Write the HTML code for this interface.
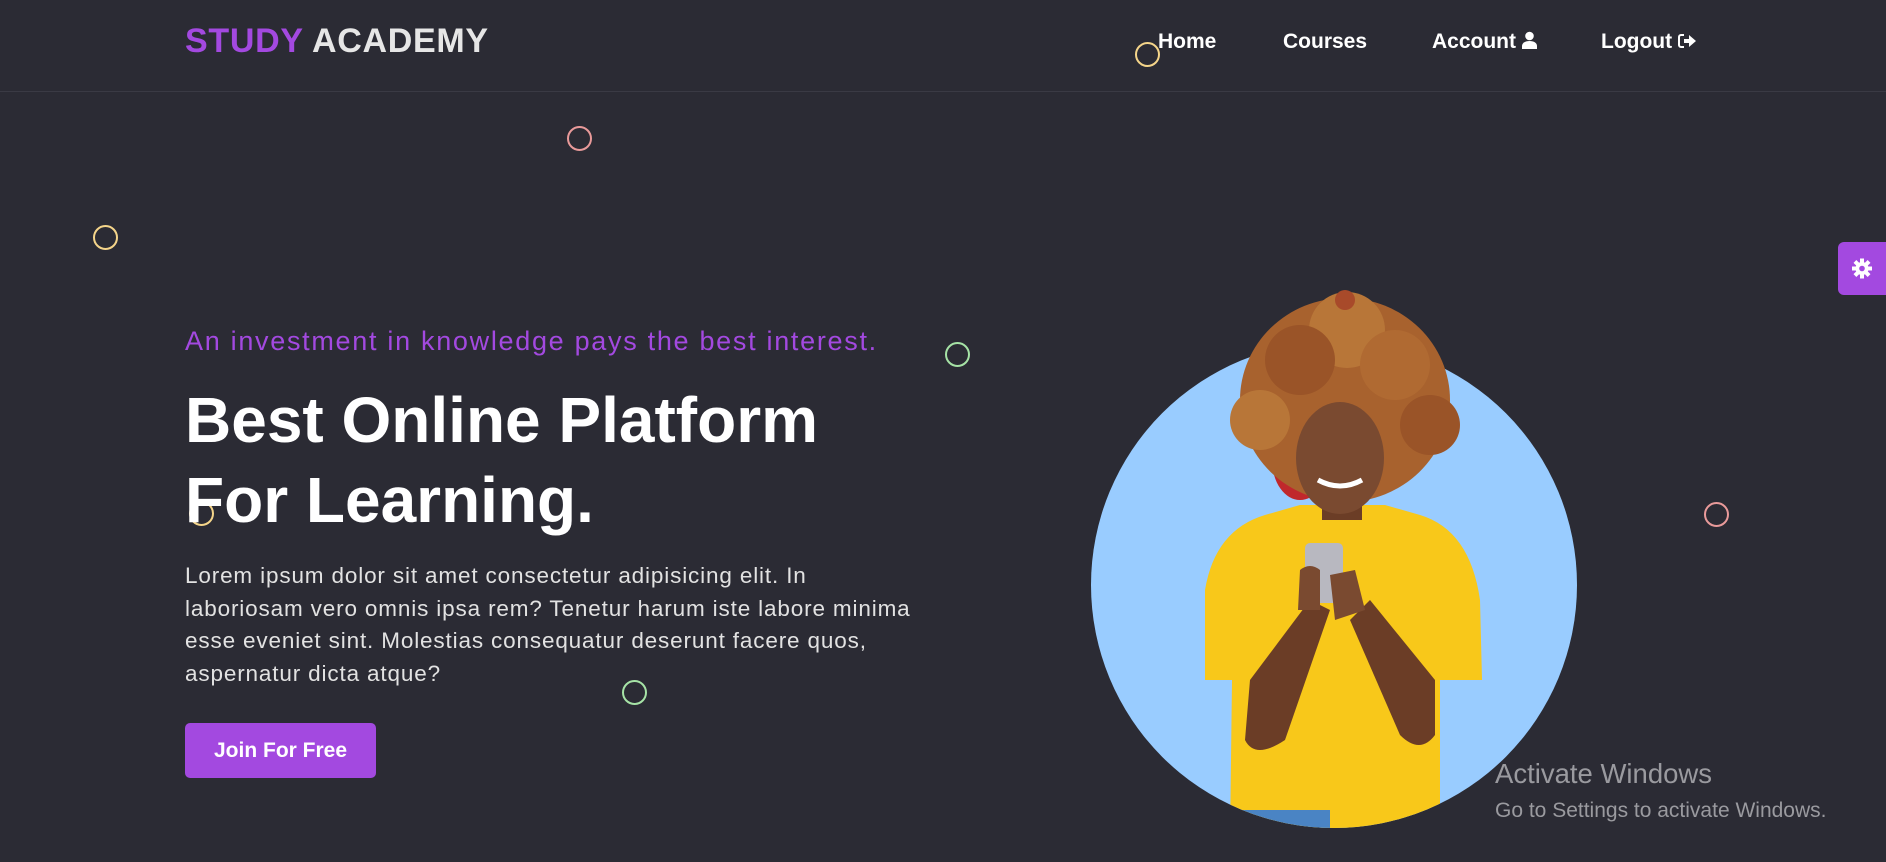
<!DOCTYPE html>
<html><head><meta charset="utf-8">
<style>
*{margin:0;padding:0;box-sizing:border-box}
body{width:1886px;height:862px;background:#2b2b34;overflow:hidden;position:relative;font-family:"Liberation Sans",sans-serif;color:#fff}
.nav{position:absolute;left:0;top:0;width:1886px;height:92px;border-bottom:1px solid #3a3a44}
.logo{position:absolute;left:185px;top:22px;font-size:34px;font-weight:bold;color:#e6e6e6;letter-spacing:0.7px}
.logo span{color:#a349e0}
.link{position:absolute;top:30px;font-size:21px;font-weight:bold;color:#fff}
.c{position:absolute;width:25px;height:25px;border:2px solid;border-radius:50%}
.tag{position:absolute;left:185px;top:326px;font-size:27px;letter-spacing:1.7px;color:#a349e0}
h1{position:absolute;left:185px;top:380px;font-size:64px;line-height:80px;font-weight:bold;color:#fff}
p{position:absolute;left:185px;top:560px;white-space:nowrap;font-size:22.5px;letter-spacing:0.85px;line-height:32.5px;color:#e2e2e2}
.btn{position:absolute;left:185px;top:723px;width:191px;height:55px;background:#a349e0;border-radius:5px;font-size:21px;font-weight:bold;text-align:center;line-height:55px}
.gear{position:absolute;left:1838px;top:242px;width:48px;height:53px;background:#a349e0;border-radius:6px 0 0 6px}
.aw{position:absolute;left:1495px;color:#9a9a9f}
</style></head><body>
<div class="nav">
<div class="logo"><span>STUDY</span> ACADEMY</div>
<div class="link" style="left:1158px">Home</div>
<div class="link" style="left:1283px">Courses</div>
<div class="link" style="left:1432px">Account <svg width="15" height="18" viewBox="0 0 15 18" style="vertical-align:-1px"><circle cx="7.5" cy="5" r="4.3" fill="#fff"/><path d="M0 18v-3c0-3 3-5 7.5-5s7.5 2 7.5 5v3z" fill="#fff"/></svg></div>
<div class="link" style="left:1601px">Logout <svg width="18" height="16" viewBox="0 0 18 16" style="vertical-align:-1px"><path d="M6 2H3a2 2 0 0 0-2 2v8a2 2 0 0 0 2 2h3" stroke="#fff" stroke-width="2" fill="none"/><path d="M6 6h5V2l7 6-7 6v-4H6z" fill="#fff"/></svg></div>
</div>
<div class="c" style="left:1135px;top:42px;border-color:#f5d58a"></div>
<div class="c" style="left:567px;top:126px;border-color:#e99a9a"></div>
<div class="c" style="left:93px;top:225px;border-color:#f5d58a"></div>
<div class="c" style="left:945px;top:342px;border-color:#a6e3a6"></div>
<div class="c" style="left:189px;top:501px;border-color:#f5d58a"></div>
<div class="c" style="left:622px;top:680px;border-color:#a6e3a6"></div>
<div class="c" style="left:1704px;top:502px;border-color:#e99a9a"></div>
<div class="gear"><svg width="48" height="53" viewBox="0 0 48 53"><g transform="translate(24 26.5)" fill="#fff"><circle r="6.5"/><rect x="-2" y="-10" width="4" height="20"/><rect x="-2" y="-10" width="4" height="20" transform="rotate(45)"/><rect x="-2" y="-10" width="4" height="20" transform="rotate(90)"/><rect x="-2" y="-10" width="4" height="20" transform="rotate(135)"/><circle r="2.8" fill="#a349e0"/></g></svg></div>
<div class="tag">An investment in knowledge pays the best interest.</div>
<h1>Best Online Platform<br>For Learning.</h1>
<p>Lorem ipsum dolor sit amet consectetur adipisicing elit. In<br>laboriosam vero omnis ipsa rem? Tenetur harum iste labore minima<br>esse eveniet sint. Molestias consequatur deserunt facere quos,<br>aspernatur dicta atque?</p>
<div class="btn">Join For Free</div>
<svg style="position:absolute;left:0;top:0" width="1886" height="862">
<defs><clipPath id="cl"><circle cx="1334" cy="585" r="243"/><rect x="1180" y="280" width="320" height="120"/></clipPath></defs>
<circle cx="1334" cy="585" r="243" fill="#99ccff"/>
<g clip-path="url(#cl)">
<ellipse cx="1300" cy="460" rx="28" ry="40" fill="#c0282c"/>
<path d="M1205 590 Q1215 530 1265 515 L1300 505 L1385 505 L1420 515 Q1470 530 1480 600 L1482 680 L1440 680 L1440 840 L1230 840 L1232 680 L1205 680 Z" fill="#f8c81a"/>
<path d="M1250 680 L1245 740 Q1255 760 1285 740 L1330 610 L1310 600 Z" fill="#6b3d26"/>
<path d="M1435 680 L1435 735 Q1420 755 1400 735 L1350 620 L1370 600 Z" fill="#6b3d26"/>
<rect x="1305" y="543" width="38" height="60" rx="5" fill="#b8b8c0"/>
<path d="M1300 570 q10 -8 20 0 v40 h-22 z M1330 575 l25 -5 l10 40 l-30 10 z" fill="#7a4a30"/>
<ellipse cx="1345" cy="400" rx="105" ry="102" fill="#a8622e"/>
<circle cx="1347" cy="330" r="38" fill="#b87638"/>
<circle cx="1300" cy="360" r="35" fill="#9a5428"/>
<circle cx="1395" cy="365" r="35" fill="#b06a32"/>
<circle cx="1260" cy="420" r="30" fill="#b87638"/>
<circle cx="1430" cy="425" r="30" fill="#9a5428"/>
<circle cx="1345" cy="300" r="10" fill="#a84a2a"/>
<rect x="1322" y="480" width="40" height="40" fill="#6b3d26"/>
<ellipse cx="1340" cy="458" rx="44" ry="56" fill="#7a4a30"/>
<path d="M1318 480 q22 12 44 0" stroke="#fff" stroke-width="5" fill="none"/>
<rect x="1240" y="810" width="90" height="30" fill="#4a84c4"/>
</g>
</svg>
<div class="aw" style="top:758px;font-size:27.5px">Activate Windows</div>
<div class="aw" style="top:799px;font-size:21px">Go to Settings to activate Windows.</div>
</body></html>
